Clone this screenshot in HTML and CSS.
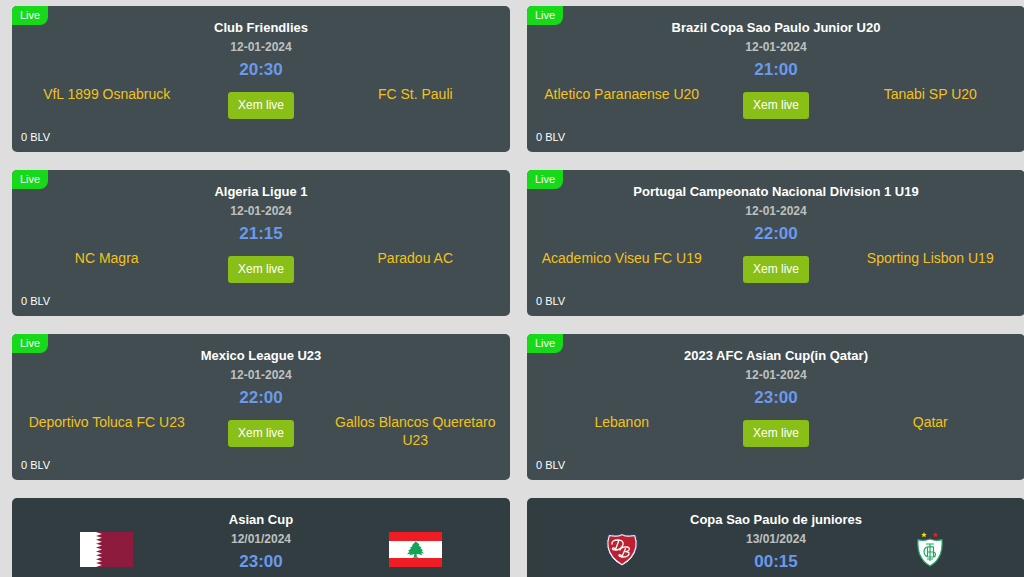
FILE: index.html
```html
<!DOCTYPE html>
<html lang="vi">
<head>
<meta charset="utf-8">
<meta name="viewport" content="width=device-width, initial-scale=1">
<title>Live</title>
<link rel="stylesheet" href="styles.css">
</head>
<body>
<main class="matches">
  <article class="card">
    <span class="badge">Live</span>
    <h2 class="league">Club Friendlies</h2>
    <div class="row">
      <div class="team"><div class="logo"></div><div class="name">VfL 1899 Osnabruck</div></div>
      <div class="info"><div class="date">12-01-2024</div><div class="time">20:30</div><a class="watch" href="#">Xem live</a></div>
      <div class="team"><div class="logo"></div><div class="name">FC St. Pauli</div></div>
    </div>
    <div class="blv">0 BLV</div>
  </article>
  <article class="card">
    <span class="badge">Live</span>
    <h2 class="league">Brazil Copa Sao Paulo Junior U20</h2>
    <div class="row">
      <div class="team"><div class="logo"></div><div class="name">Atletico Paranaense U20</div></div>
      <div class="info"><div class="date">12-01-2024</div><div class="time">21:00</div><a class="watch" href="#">Xem live</a></div>
      <div class="team"><div class="logo"></div><div class="name">Tanabi SP U20</div></div>
    </div>
    <div class="blv">0 BLV</div>
  </article>
  <article class="card">
    <span class="badge">Live</span>
    <h2 class="league">Algeria Ligue 1</h2>
    <div class="row">
      <div class="team"><div class="logo"></div><div class="name">NC Magra</div></div>
      <div class="info"><div class="date">12-01-2024</div><div class="time">21:15</div><a class="watch" href="#">Xem live</a></div>
      <div class="team"><div class="logo"></div><div class="name">Paradou AC</div></div>
    </div>
    <div class="blv">0 BLV</div>
  </article>
  <article class="card">
    <span class="badge">Live</span>
    <h2 class="league">Portugal Campeonato Nacional Division 1 U19</h2>
    <div class="row">
      <div class="team"><div class="logo"></div><div class="name">Academico Viseu FC U19</div></div>
      <div class="info"><div class="date">12-01-2024</div><div class="time">22:00</div><a class="watch" href="#">Xem live</a></div>
      <div class="team"><div class="logo"></div><div class="name">Sporting Lisbon U19</div></div>
    </div>
    <div class="blv">0 BLV</div>
  </article>
  <article class="card">
    <span class="badge">Live</span>
    <h2 class="league">Mexico League U23</h2>
    <div class="row">
      <div class="team"><div class="logo"></div><div class="name">Deportivo Toluca FC U23</div></div>
      <div class="info"><div class="date">12-01-2024</div><div class="time">22:00</div><a class="watch" href="#">Xem live</a></div>
      <div class="team"><div class="logo"></div><div class="name">Gallos Blancos Queretaro U23</div></div>
    </div>
    <div class="blv">0 BLV</div>
  </article>
  <article class="card">
    <span class="badge">Live</span>
    <h2 class="league">2023 AFC Asian Cup(in Qatar)</h2>
    <div class="row">
      <div class="team"><div class="logo"></div><div class="name">Lebanon</div></div>
      <div class="info"><div class="date">12-01-2024</div><div class="time">23:00</div><a class="watch" href="#">Xem live</a></div>
      <div class="team"><div class="logo"></div><div class="name">Qatar</div></div>
    </div>
    <div class="blv">0 BLV</div>
  </article>
  <article class="card upcoming">
    <h2 class="league">Asian Cup</h2>
    <div class="row">
      <div class="team"><div class="logo">
        <svg width="53" height="35" viewBox="0 0 53 35" role="img" aria-label="Qatar">
          <path fill="#8d1b3d" d="M0 0h53v35H0z"/>
          <path fill="#fff" d="M0 0h16l6 1.94-6 1.95 6 1.94-6 1.95 6 1.94-6 1.95 6 1.94-6 1.95 6 1.94-6 1.95 6 1.94-6 1.95 6 1.94-6 1.95 6 1.94-6 1.95 6 1.94-6 1.94H0z"/>
        </svg></div></div>
      <div class="info"><div class="date">12/01/2024</div><div class="time">23:00</div></div>
      <div class="team"><div class="logo">
        <svg width="53" height="35" viewBox="0 0 53 35" role="img" aria-label="Lebanon">
          <path fill="#ee1c25" d="M0 0h53v35H0z"/>
          <path fill="#fff" d="M0 9h53v17H0z"/>
          <path fill="#14a457" d="M26.500 9.500l2.500 1.500 1.500 2-1 .5 3 2-1 .8 2.500 2-1.500.7 2.500 2.500-3-.3 1.500 2-4.500-1.200-1.500.3.500 2.500 2 .9h-7l2-.9.300-2.700-5.300 1.400 1.500-1.800-3.500.5 2.500-2.700-1.500-.6 3-2.300-1-.8 2.700-1.800-.7-.7z"/>
        </svg></div></div>
    </div>
  </article>
  <article class="card upcoming">
    <h2 class="league">Copa Sao Paulo de juniores</h2>
    <div class="row">
      <div class="team"><div class="logo">
        <svg width="32" height="35" viewBox="0 0 32 35" role="img" aria-label="Desportivo Brasil">
          <path fill="#f4eef2" stroke="#263762" d="M16 1.500q3 2 7 1.500l6.500-.5q2.500 6 1.500 13-2.500 12-15 18.500Q3.500 27.500 1 15.500 0 8.500 2.500 2.500L9 3q4 .5 7-1.500z"/>
          <path fill="#bd202f" d="M16 3.200q3.500 1.800 7 1.500l5.300-.4q1.800 5.200.9 11Q27 25.500 16 32 5 25.500 2.800 15.300q-.9-5.800.9-11L9 4.700q3.500.3 7-1.500z"/>
          <path fill="none" stroke="#fff" stroke-width="1.300" stroke-linecap="round" d="M12.500 9.500l-3 8M6 12q-.5-4 6-4 6 .2 5 4.500-1.500 5-7 5.500-4 0-3.500-1.500.8-1.500 3.500.8M19.500 16.500l-3.500 8M14 18q1.500-3.500 7-3 3.500.7 2 3-1 1.500-4 1.600 4.500-.1 4 2.400-1 3-6 3-4.500-.2-4-2 .8-1 3 1"/>
        </svg></div></div>
      <div class="info"><div class="date">13/01/2024</div><div class="time">00:15</div></div>
      <div class="team"><div class="logo">
        <svg width="26" height="35" viewBox="0 0 26 35" role="img" aria-label="America Mineiro">
          <path fill="#f5e20f" d="M7 0l.8 1.900 2 .1-1.500 1.300.5 2L7 4.200 5.200 5.300l.5-2L4.200 2l2-.1z"/>
          <path fill="#dc252c" d="M18.500 0l.8 1.900 2 .1-1.500 1.300.5 2-1.800-1.100-1.800 1.100.5-2L15.700 2l2-.1z"/>
          <path fill="#fff" stroke="#20a861" stroke-width="1.300" d="M13 7q5.500 2.200 12 .7.700 8-1.500 14.300Q20 30.500 13 34 6 30.500 2.500 22 .3 15.700 1 7.700 7.500 9.200 13 7z"/>
          <path fill="none" stroke="#20a861" stroke-width="1.200" d="M9 12h8M13 12v17M17 15q-10-2-10 5 .5 5 6 5h3.500q2-.5 2-2.500t-2-2.500H10M10.500 15.500V25M16.500 15v10M10 27h6"/>
        </svg></div></div>
    </div>
  </article>
</main>
</body>
</html>
```
FILE: styles.css
```css
* { box-sizing: border-box; }

body {
  margin: 0;
  height: 100vh;
  overflow: hidden;
  background: #dedede;
  font-family: "Liberation Sans", Arial, sans-serif;
}

.matches {
  display: grid;
  grid-template-columns: 1fr 1fr;
  gap: 18px 17px;
  margin-right: -1px;
  padding: 6px 0 0 12px;
}

.card {
  position: relative;
  display: flex;
  flex-direction: column;
  min-height: 146px;
  padding: 12px 9px 7px;
  border-radius: 5px;
  overflow: hidden;
  background: #414d50;
  color: #fff;
  text-align: center;
}

.upcoming { background: #313d41; }

.badge {
  position: absolute;
  top: 0;
  left: 0;
  padding: 0 8px;
  border-bottom-right-radius: 8px;
  background: #16d91a;
  font-size: 11px;
  line-height: 19px;
}

.league {
  margin: 0;
  font-size: 13px;
  line-height: 20px;
}

.row {
  display: grid;
  grid-template-columns: 5fr 4fr 5fr;
}

.team { padding-top: 2px; }

.logo {
  display: flex;
  justify-content: center;
  height: 36px;
}

.name {
  margin-top: 9px;
  padding: 0 4px;
  color: #f2c21d;
  font-size: 14px;
  line-height: 18px;
}

.date {
  color: #bfc0c0;
  font-size: 12px;
  font-weight: bold;
  line-height: 18px;
}

.time {
  margin-top: 2px;
  color: #6b99ee;
  font-size: 17px;
  font-weight: bold;
  line-height: 24px;
}

.watch {
  display: inline-block;
  margin-top: 10px;
  padding: 0 10px;
  border-radius: 3px;
  background: #8abf18;
  color: #fff;
  font-size: 12px;
  line-height: 27px;
  text-decoration: none;
}

.blv {
  margin-top: auto;
  font-size: 11px;
  line-height: 16px;
  text-align: left;
}
```
